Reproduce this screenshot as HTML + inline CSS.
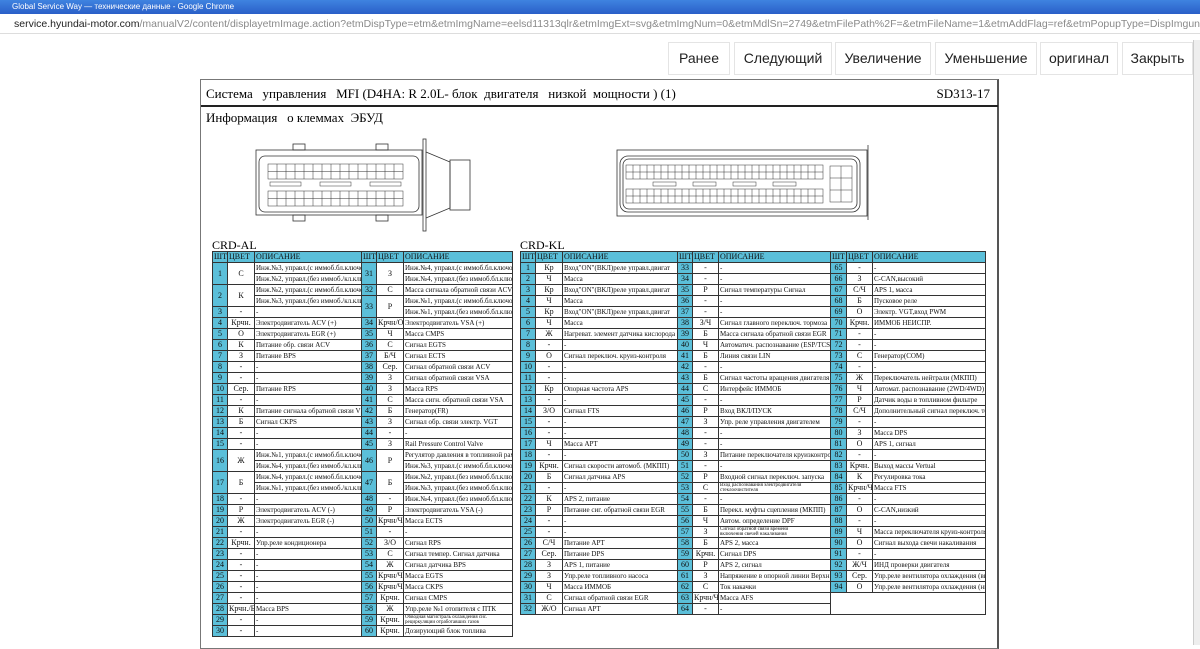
<!DOCTYPE html>
<html><head><meta charset="utf-8"><style>
*{margin:0;padding:0;box-sizing:border-box}
body{width:1200px;height:645px;overflow:hidden;background:#fff;position:relative;font-family:"Liberation Serif","Noto Serif CJK SC",serif}
#tb{position:absolute;left:0;top:0;width:1200px;height:14px;background:linear-gradient(#3f83e0,#2a5fc8);color:#fff;font:8px "Liberation Sans",sans-serif;padding:2px 0 0 12px;overflow:hidden}
#ab{position:absolute;left:0;top:14px;width:1200px;height:20px;background:#fff;border-bottom:1px solid #ddd;font:10.5px "Liberation Sans",sans-serif;color:#8a8a8a;padding:4px 0 0 14px;white-space:nowrap;overflow:hidden}
#ab b{font-weight:normal;color:#222}
.btn{position:absolute;top:42px;height:33px;border:1px solid #e4e4e4;background:#fff;font:14px "Liberation Sans",sans-serif;color:#222;text-align:center;line-height:31px}
#doc{position:absolute;left:200px;top:79px;width:799px;height:570px;border:1px solid #777;border-right:2px solid #555}
#h1{position:absolute;left:0;top:0;width:797px;height:27px;border-bottom:2px solid #222;font-size:13px;padding:6px 0 0 5px;white-space:nowrap}
#h1 span{position:absolute;right:8px;top:6px}
#h2{position:absolute;left:5px;top:30px;font-size:13px}
.cap{position:absolute;font-size:12px}
table{position:absolute;border-collapse:collapse;table-layout:fixed}
td{border:1px solid #333;height:11px;line-height:10px;font-size:7px;padding:0 1px;white-space:nowrap;overflow:hidden;color:#111}
td.n{background:#5bbfd9;text-align:center;font-size:8px}
td.c{text-align:center;font-size:8px}
tr.h td{background:#5bbfd9;font-size:8px}
#sb{position:absolute;left:1193px;top:40px;width:7px;height:605px;background:#eee;border-left:1px solid #ccc}
</style></head><body>
<div id="tb">Global Service Way — технические данные - Google Chrome</div>
<div id="ab"><b>service.hyundai-motor.com</b>/manualV2/content/displayetmImage.action?etmDispType=etm&amp;etmImgName=eelsd11313qlr&amp;etmImgExt=svg&amp;etmImgNum=0&amp;etmMdlSn=2749&amp;etmFilePath%2F=&amp;etmFileName=1&amp;etmAddFlag=ref&amp;etmPopupType=DispImgunde</div>
<div class="btn" style="left:668px;width:62px">Ранее</div>
<div class="btn" style="left:734px;width:98px">Следующий</div>
<div class="btn" style="left:835px;width:96px">Увеличение</div>
<div class="btn" style="left:935px;width:102px">Уменьшение</div>
<div class="btn" style="left:1040px;width:78px">оригинал</div>
<div class="btn" style="left:1122px;width:71px">Закрыть</div>
<div id="sb"></div>
<div id="doc">
<div id="h1">Система &nbsp; управления &nbsp; MFI (D4HA: R 2.0L- блок &nbsp;двигателя &nbsp; низкой &nbsp;мощности ) (1)<span>SD313-17</span></div>
<div id="h2">Информация &nbsp; о клеммах &nbsp;ЭБУД</div>
</div>
<svg style="position:absolute;left:0;top:0" width="1200" height="645" fill="none" stroke="#333" stroke-width="0.8">
<rect x="256" y="150" width="166" height="65"/>
<rect x="259" y="156" width="160" height="56" rx="6"/>
<rect x="293" y="144" width="12" height="6"/><rect x="376" y="144" width="12" height="6"/>
<rect x="293" y="215" width="12" height="6"/><rect x="376" y="215" width="12" height="6"/>
<rect x="423" y="139" width="3" height="92"/>
<path d="M426 152 L450 162 L450 208 L426 218"/>
<rect x="450" y="160" width="20" height="50"/>
<g stroke-width="0.5">
<rect x="268" y="164" width="135" height="15"/><line x1="268" y1="171.5" x2="403" y2="171.5"/>
<rect x="268" y="191" width="135" height="15"/><line x1="268" y1="198.5" x2="403" y2="198.5"/>
<rect x="270" y="182" width="31" height="4"/><rect x="320" y="182" width="31" height="4"/><rect x="370" y="182" width="31" height="4"/>
<path d="M277 164v15M286 164v15M295 164v15M304 164v15M313 164v15M322 164v15M331 164v15M340 164v15M349 164v15M358 164v15M367 164v15M376 164v15M385 164v15M394 164v15"/>
<path d="M277 191v15M286 191v15M295 191v15M304 191v15M313 191v15M322 191v15M331 191v15M340 191v15M349 191v15M358 191v15M367 191v15M376 191v15M385 191v15M394 191v15"/>
</g>
<rect x="617" y="150" width="250" height="66"/>
<rect x="620" y="156" width="240" height="56" rx="8"/>
<rect x="623" y="159" width="234" height="50" rx="6"/>
<line x1="868" y1="145" x2="868" y2="220"/>
<g stroke-width="0.5">
<rect x="626" y="165" width="197" height="14"/><line x1="626" y1="172" x2="823" y2="172"/>
<rect x="626" y="189" width="197" height="14"/><line x1="626" y1="196" x2="823" y2="196"/>
<rect x="653" y="182" width="23" height="4"/><rect x="693" y="182" width="23" height="4"/><rect x="733" y="182" width="23" height="4"/><rect x="773" y="182" width="23" height="4"/>
<path d="M633 165v14M640 165v14M647 165v14M654 165v14M661 165v14M668 165v14M675 165v14M682 165v14M689 165v14M696 165v14M703 165v14M710 165v14M717 165v14M724 165v14M731 165v14M738 165v14M745 165v14M752 165v14M759 165v14M766 165v14M773 165v14M780 165v14M787 165v14M794 165v14M801 165v14M808 165v14M815 165v14"/>
<path d="M633 189v14M640 189v14M647 189v14M654 189v14M661 189v14M668 189v14M675 189v14M682 189v14M689 189v14M696 189v14M703 189v14M710 189v14M717 189v14M724 189v14M731 189v14M738 189v14M745 189v14M752 189v14M759 189v14M766 189v14M773 189v14M780 189v14M787 189v14M794 189v14M801 189v14M808 189v14M815 189v14"/>
<rect x="830" y="166" width="22" height="36"/><line x1="841" y1="166" x2="841" y2="202"/><line x1="830" y1="178" x2="852" y2="178"/><line x1="830" y1="190" x2="852" y2="190"/>
</g>
</svg>
<div class="cap" style="left:212px;top:238px">CRD-AL</div>
<div class="cap" style="left:520px;top:238px">CRD-KL</div>

<table style="left:212px;top:251px;width:300px">
<colgroup><col style="width:15px"><col style="width:27px"><col style="width:107px"><col style="width:15px"><col style="width:27px"><col style="width:109px"></colgroup>
<tr class="h"><td>ШТ</td><td>ЦВЕТ</td><td>ОПИСАНИЕ</td><td>ШТ</td><td>ЦВЕТ</td><td>ОПИСАНИЕ</td></tr>
<tr><td class="n" rowspan="2">1</td><td class="c" rowspan="2">С</td><td>Инж.№3, управл.(с иммоб.бл.ключом)</td><td class="n" rowspan="2">31</td><td class="c" rowspan="2">З</td><td>Инж.№4, управл.(с иммоб.бл.ключом)</td></tr>
<tr><td>Инж.№2, управл.(без иммоб./кл.ключа)</td><td>Инж.№4, управл.(без иммоб.бл.ключа)</td></tr>
<tr><td class="n" rowspan="2">2</td><td class="c" rowspan="2">К</td><td>Инж.№2, управл.(с иммоб.бл.ключом)</td><td class="n">32</td><td class="c">С</td><td>Масса сигнала обратной связи ACV</td></tr>
<tr><td>Инж.№3, управл.(без иммоб./кл.ключа)</td><td class="n" rowspan="2">33</td><td class="c" rowspan="2">Р</td><td>Инж.№1, управл.(с иммоб.бл.ключом)</td></tr>
<tr><td class="n">3</td><td class="c">-</td><td>-</td><td>Инж.№1, управл.(без иммоб.бл.ключа)</td></tr>
<tr><td class="n">4</td><td class="c">Крчн.</td><td>Электродвигатель ACV (+)</td><td class="n">34</td><td class="c">Крчн/О</td><td>Электродвигатель VSA (+)</td></tr>
<tr><td class="n">5</td><td class="c">О</td><td>Электродвигатель EGR (+)</td><td class="n">35</td><td class="c">Ч</td><td>Масса CMPS</td></tr>
<tr><td class="n">6</td><td class="c">К</td><td>Питание обр. связи ACV</td><td class="n">36</td><td class="c">С</td><td>Сигнал EGTS</td></tr>
<tr><td class="n">7</td><td class="c">З</td><td>Питание BPS</td><td class="n">37</td><td class="c">Б/Ч</td><td>Сигнал ECTS</td></tr>
<tr><td class="n">8</td><td class="c">-</td><td>-</td><td class="n">38</td><td class="c">Сер.</td><td>Сигнал обратной связи ACV</td></tr>
<tr><td class="n">9</td><td class="c">-</td><td>-</td><td class="n">39</td><td class="c">З</td><td>Сигнал обратной связи VSA</td></tr>
<tr><td class="n">10</td><td class="c">Сер.</td><td>Питание RPS</td><td class="n">40</td><td class="c">З</td><td>Масса RPS</td></tr>
<tr><td class="n">11</td><td class="c">-</td><td>-</td><td class="n">41</td><td class="c">С</td><td>Масса сигн. обратной связи VSA</td></tr>
<tr><td class="n">12</td><td class="c">К</td><td>Питание сигнала обратной связи VSA</td><td class="n">42</td><td class="c">Б</td><td>Генератор(FR)</td></tr>
<tr><td class="n">13</td><td class="c">Б</td><td>Сигнал CKPS</td><td class="n">43</td><td class="c">З</td><td>Сигнал обр. связи электр. VGT</td></tr>
<tr><td class="n">14</td><td class="c">-</td><td>-</td><td class="n">44</td><td class="c">-</td><td>-</td></tr>
<tr><td class="n">15</td><td class="c">-</td><td>-</td><td class="n">45</td><td class="c">З</td><td>Rail Pressure Control Valve</td></tr>
<tr><td class="n" rowspan="2">16</td><td class="c" rowspan="2">Ж</td><td>Инж.№1, управл.(с иммоб.бл.ключом)</td><td class="n" rowspan="2">46</td><td class="c" rowspan="2">Р</td><td>Регулятор давления в топливной рампе</td></tr>
<tr><td>Инж.№4, управл.(без иммоб./кл.ключа)</td><td>Инж.№3, управл.(с иммоб.бл.ключом)</td></tr>
<tr><td class="n" rowspan="2">17</td><td class="c" rowspan="2">Б</td><td>Инж.№4, управл.(с иммоб.бл.ключом)</td><td class="n" rowspan="2">47</td><td class="c" rowspan="2">Б</td><td>Инж.№2, управл.(без иммоб.бл.ключа)</td></tr>
<tr><td>Инж.№1, управл.(без иммоб./кл.ключа)</td><td>Инж.№3, управл.(без иммоб.бл.ключа)</td></tr>
<tr><td class="n">18</td><td class="c">-</td><td>-</td><td class="n">48</td><td class="c">-</td><td>Инж.№4, управл.(без иммоб.бл.ключа)</td></tr>
<tr><td class="n">19</td><td class="c">Р</td><td>Электродвигатель ACV (-)</td><td class="n">49</td><td class="c">Р</td><td>Электродвигатель VSA (-)</td></tr>
<tr><td class="n">20</td><td class="c">Ж</td><td>Электродвигатель EGR (-)</td><td class="n">50</td><td class="c">Крчн/Ч</td><td>Масса ECTS</td></tr>
<tr><td class="n">21</td><td class="c">-</td><td>-</td><td class="n">51</td><td class="c">-</td><td>-</td></tr>
<tr><td class="n">22</td><td class="c">Крчн.</td><td>Упр.реле кондиционера</td><td class="n">52</td><td class="c">З/О</td><td>Сигнал RPS</td></tr>
<tr><td class="n">23</td><td class="c">-</td><td>-</td><td class="n">53</td><td class="c">С</td><td>Сигнал темпер. Сигнал датчика</td></tr>
<tr><td class="n">24</td><td class="c">-</td><td>-</td><td class="n">54</td><td class="c">Ж</td><td>Сигнал датчика BPS</td></tr>
<tr><td class="n">25</td><td class="c">-</td><td>-</td><td class="n">55</td><td class="c">Крчн/Ч</td><td>Масса EGTS</td></tr>
<tr><td class="n">26</td><td class="c">-</td><td>-</td><td class="n">56</td><td class="c">Крчн/Ч</td><td>Масса CKPS</td></tr>
<tr><td class="n">27</td><td class="c">-</td><td>-</td><td class="n">57</td><td class="c">Крчн.</td><td>Сигнал CMPS</td></tr>
<tr><td class="n">28</td><td class="c">Крчн./Б</td><td>Масса BPS</td><td class="n">58</td><td class="c">Ж</td><td>Упр.реле №1 отопителя с ПТК</td></tr>
<tr><td class="n">29</td><td class="c">-</td><td>-</td><td class="n">59</td><td class="c">Крчн.</td><td style="font-size:5px;line-height:5px">Обводная магистраль охлаждения сис.<br>рециркуляции отработавших газов</td></tr>
<tr><td class="n">30</td><td class="c">-</td><td>-</td><td class="n">60</td><td class="c">Крчн.</td><td>Дозирующий блок топлива</td></tr>
</table>

<table style="left:520px;top:251px;width:465px">
<colgroup><col style="width:15px"><col style="width:27px"><col style="width:115px"><col style="width:15px"><col style="width:26px"><col style="width:112px"><col style="width:16px"><col style="width:26px"><col style="width:113px"></colgroup>
<tr class="h"><td>ШТ</td><td>ЦВЕТ</td><td>ОПИСАНИЕ</td><td>ШТ</td><td>ЦВЕТ</td><td>ОПИСАНИЕ</td><td>ШТ</td><td>ЦВЕТ</td><td>ОПИСАНИЕ</td></tr>
<tr><td class="n">1</td><td class="c">Кр</td><td>Вход"ON"(ВКЛ)реле управл.двигат</td><td class="n">33</td><td class="c">-</td><td>-</td><td class="n">65</td><td class="c">-</td><td>-</td></tr>
<tr><td class="n">2</td><td class="c">Ч</td><td>Масса</td><td class="n">34</td><td class="c">-</td><td>-</td><td class="n">66</td><td class="c">З</td><td>C-CAN,высокий</td></tr>
<tr><td class="n">3</td><td class="c">Кр</td><td>Вход"ON"(ВКЛ)реле управл.двигат</td><td class="n">35</td><td class="c">Р</td><td>Сигнал температуры Сигнал</td><td class="n">67</td><td class="c">С/Ч</td><td>APS 1, масса</td></tr>
<tr><td class="n">4</td><td class="c">Ч</td><td>Масса</td><td class="n">36</td><td class="c">-</td><td>-</td><td class="n">68</td><td class="c">Б</td><td>Пусковое реле</td></tr>
<tr><td class="n">5</td><td class="c">Кр</td><td>Вход"ON"(ВКЛ)реле управл.двигат</td><td class="n">37</td><td class="c">-</td><td>-</td><td class="n">69</td><td class="c">О</td><td>Электр. VGT,вход PWM</td></tr>
<tr><td class="n">6</td><td class="c">Ч</td><td>Масса</td><td class="n">38</td><td class="c">З/Ч</td><td>Сигнал главного переключ. тормоза</td><td class="n">70</td><td class="c">Крчн.</td><td>ИММОБ НЕИСПР.</td></tr>
<tr><td class="n">7</td><td class="c">Ж</td><td>Нагреват. элемент датчика кислорода</td><td class="n">39</td><td class="c">Б</td><td>Масса сигнала обратной связи EGR</td><td class="n">71</td><td class="c">-</td><td>-</td></tr>
<tr><td class="n">8</td><td class="c">-</td><td>-</td><td class="n">40</td><td class="c">Ч</td><td>Автоматич. распознавание (ESP/TCS)</td><td class="n">72</td><td class="c">-</td><td>-</td></tr>
<tr><td class="n">9</td><td class="c">О</td><td>Сигнал переключ. круиз-контроля</td><td class="n">41</td><td class="c">Б</td><td>Линия связи LIN</td><td class="n">73</td><td class="c">С</td><td>Генератор(COM)</td></tr>
<tr><td class="n">10</td><td class="c">-</td><td>-</td><td class="n">42</td><td class="c">-</td><td>-</td><td class="n">74</td><td class="c">-</td><td>-</td></tr>
<tr><td class="n">11</td><td class="c">-</td><td>-</td><td class="n">43</td><td class="c">Б</td><td>Сигнал частоты вращения двигателя</td><td class="n">75</td><td class="c">Ж</td><td>Переключатель нейтрали (МКПП)</td></tr>
<tr><td class="n">12</td><td class="c">Кр</td><td>Опорная частота APS</td><td class="n">44</td><td class="c">С</td><td>Интерфейс ИММОБ</td><td class="n">76</td><td class="c">Ч</td><td>Автомат. распознавание (2WD/4WD)</td></tr>
<tr><td class="n">13</td><td class="c">-</td><td>-</td><td class="n">45</td><td class="c">-</td><td>-</td><td class="n">77</td><td class="c">Р</td><td>Датчик воды в топливном фильтре</td></tr>
<tr><td class="n">14</td><td class="c">З/О</td><td>Сигнал FTS</td><td class="n">46</td><td class="c">Р</td><td>Вход ВКЛ/ПУСК</td><td class="n">78</td><td class="c">С/Ч</td><td>Дополнительный сигнал переключ. тормоза</td></tr>
<tr><td class="n">15</td><td class="c">-</td><td>-</td><td class="n">47</td><td class="c">З</td><td>Упр. реле управления двигателем</td><td class="n">79</td><td class="c">-</td><td>-</td></tr>
<tr><td class="n">16</td><td class="c">-</td><td>-</td><td class="n">48</td><td class="c">-</td><td>-</td><td class="n">80</td><td class="c">З</td><td>Масса DPS</td></tr>
<tr><td class="n">17</td><td class="c">Ч</td><td>Масса APT</td><td class="n">49</td><td class="c">-</td><td>-</td><td class="n">81</td><td class="c">О</td><td>APS 1, сигнал</td></tr>
<tr><td class="n">18</td><td class="c">-</td><td>-</td><td class="n">50</td><td class="c">З</td><td>Питание переключателя круизконтроля</td><td class="n">82</td><td class="c">-</td><td>-</td></tr>
<tr><td class="n">19</td><td class="c">Крчн.</td><td>Сигнал скорости автомоб. (МКПП)</td><td class="n">51</td><td class="c">-</td><td>-</td><td class="n">83</td><td class="c">Крчн.</td><td>Выход массы Vertual</td></tr>
<tr><td class="n">20</td><td class="c">Б</td><td>Сигнал датчика APS</td><td class="n">52</td><td class="c">Р</td><td>Входной сигнал переключ. запуска</td><td class="n">84</td><td class="c">К</td><td>Регулировка тока</td></tr>
<tr><td class="n">21</td><td class="c">-</td><td>-</td><td class="n">53</td><td class="c">С</td><td style="font-size:5px;line-height:5px">Вход распознавания электродвигателя<br>стеклоочистителя</td><td class="n">85</td><td class="c">Крчн/Ч</td><td>Масса FTS</td></tr>
<tr><td class="n">22</td><td class="c">К</td><td>APS 2, питание</td><td class="n">54</td><td class="c">-</td><td>-</td><td class="n">86</td><td class="c">-</td><td>-</td></tr>
<tr><td class="n">23</td><td class="c">Р</td><td>Питание сиг. обратной связи EGR</td><td class="n">55</td><td class="c">Б</td><td>Перекл. муфты сцепления (МКПП)</td><td class="n">87</td><td class="c">О</td><td>C-CAN,низкий</td></tr>
<tr><td class="n">24</td><td class="c">-</td><td>-</td><td class="n">56</td><td class="c">Ч</td><td>Автом. определение DPF</td><td class="n">88</td><td class="c">-</td><td>-</td></tr>
<tr><td class="n">25</td><td class="c">-</td><td>-</td><td class="n">57</td><td class="c">З</td><td style="font-size:5px;line-height:5px">Сигнал обратной связи времени<br>включения свечей накаливания</td><td class="n">89</td><td class="c">Ч</td><td>Масса переключателя круиз-контроля</td></tr>
<tr><td class="n">26</td><td class="c">С/Ч</td><td>Питание APT</td><td class="n">58</td><td class="c">Б</td><td>APS 2, масса</td><td class="n">90</td><td class="c">О</td><td>Сигнал выхода свечи накаливания</td></tr>
<tr><td class="n">27</td><td class="c">Сер.</td><td>Питание DPS</td><td class="n">59</td><td class="c">Крчн.</td><td>Сигнал DPS</td><td class="n">91</td><td class="c">-</td><td>-</td></tr>
<tr><td class="n">28</td><td class="c">З</td><td>APS 1, питание</td><td class="n">60</td><td class="c">Р</td><td>APS 2, сигнал</td><td class="n">92</td><td class="c">Ж/Ч</td><td>ИНД проверки двигателя</td></tr>
<tr><td class="n">29</td><td class="c">З</td><td>Упр.реле топливного насоса</td><td class="n">61</td><td class="c">З</td><td>Напряжение в опорной линии Верхн.</td><td class="n">93</td><td class="c">Сер.</td><td>Упр.реле вентилятора охлаждения (выс.)</td></tr>
<tr><td class="n">30</td><td class="c">Ч</td><td>Масса ИММОБ</td><td class="n">62</td><td class="c">С</td><td>Ток накачки</td><td class="n">94</td><td class="c">О</td><td>Упр.реле вентилятора охлаждения (низк.)</td></tr>
<tr><td class="n">31</td><td class="c">С</td><td>Сигнал обратной связи EGR</td><td class="n">63</td><td class="c">Крчн/Ч</td><td>Масса AFS</td><td colspan="3" rowspan="2" style="border-top:1px solid #333"></td></tr>
<tr><td class="n">32</td><td class="c">Ж/О</td><td>Сигнал APT</td><td class="n">64</td><td class="c">-</td><td>-</td></tr>
</table>
</body></html>
